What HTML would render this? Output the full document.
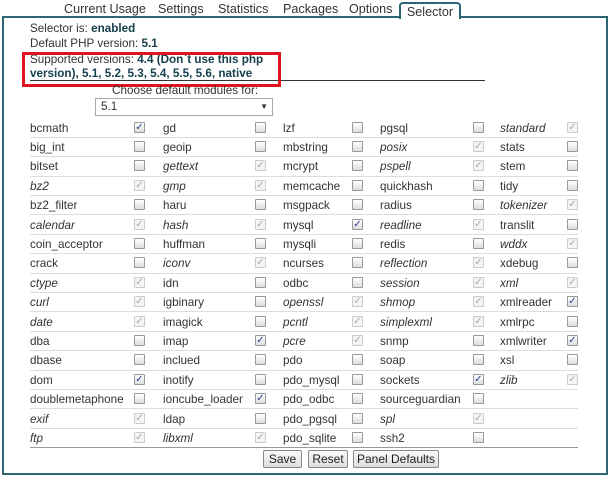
<!DOCTYPE html>
<html><head><style>
*{margin:0;padding:0;box-sizing:border-box}
body{width:610px;height:488px;background:#fff;font-family:"Liberation Sans",sans-serif;font-size:11.7px;color:#333;position:relative;overflow:hidden}
.a{position:absolute}
.tab{position:absolute;top:1px;height:16px;font-size:12.6px;color:#333;line-height:16px}
.panel{position:absolute;left:2px;top:16px;width:606px;height:459px;border:2px solid #2e6575}
b{color:#16404e}
.row{position:absolute;left:30px;width:548px;height:19.4px;border-bottom:1px solid #ddd}
.row span{position:absolute;top:3px;line-height:14px}
.n1{left:0}.n2{left:133px}.n3{left:253px}.n4{left:350px}.n5{left:470px}
.c1{left:104px}.c2{left:225px}.c3{left:322px}.c4{left:443px}.c5{left:537px}
i.cb{position:absolute;top:3px;width:11px;height:11px;border:1px solid #999;background:linear-gradient(#fff,#ddd);border-radius:1px;font-style:normal;font-size:10px;line-height:9px;text-align:center;color:#2a3f8f}
i.d{border-color:#ccc;background:#f4f4f4;color:#aaa}
em{font-style:italic}
.btn{position:absolute;top:450px;height:18px;border:1px solid #888;border-radius:2px;background:linear-gradient(#fafafa,#ddd);font-size:12px;line-height:16px;text-align:center;color:#222}
</style></head><body>
<div class="panel"></div>
<div class="tab" style="left:64px">Current Usage</div>
<div class="tab" style="left:158px">Settings</div>
<div class="tab" style="left:218px">Statistics</div>
<div class="tab" style="left:283px">Packages</div>
<div class="tab" style="left:349px">Options</div>
<div class="a" style="left:399px;top:2px;width:62px;height:17px;background:#fff;border:2px solid #2e6575;border-bottom:none;border-radius:4px 4px 0 0;text-align:center;line-height:16px;color:#333;font-size:12.6px">Selector</div>
<div class="a" style="left:30px;top:22px;line-height:14px">Selector is: <b>enabled</b></div>
<div class="a" style="left:30px;top:37px;line-height:14px">Default PHP version: <b>5.1</b></div>
<div class="a" style="left:30px;top:53px;line-height:13.5px;width:250px">Supported versions: <b>4.4 (Don`t use this php version), 5.1, 5.2, 5.3, 5.4, 5.5, 5.6, native</b></div>
<div class="a" style="left:30px;top:80px;width:455px;height:1px;background:#333"></div>
<div class="a" style="left:22px;top:52px;width:259px;height:35px;border:3px solid #e0141e"></div>
<div class="a" style="left:112px;top:84px;line-height:14px">Choose default modules for:</div>
<div class="a" style="left:95px;top:98px;width:178px;height:18px;border:1px solid #aaa;background:#fff;line-height:16px;padding-left:5px">5.1<span style="position:absolute;right:4px;top:0;font-size:8px">▼</span></div>

<div class="row" style="top:118.5px"><span class="n1">bcmath</span><i class="cb c1">✓</i><span class="n2">gd</span><i class="cb c2"></i><span class="n3">lzf</span><i class="cb c3"></i><span class="n4">pgsql</span><i class="cb c4"></i><span class="n5"><em>standard</em></span><i class="cb d c5">✓</i></div>
<div class="row" style="top:137.9px"><span class="n1">big_int</span><i class="cb c1"></i><span class="n2">geoip</span><i class="cb c2"></i><span class="n3">mbstring</span><i class="cb c3"></i><span class="n4"><em>posix</em></span><i class="cb d c4">✓</i><span class="n5">stats</span><i class="cb c5"></i></div>
<div class="row" style="top:157.3px"><span class="n1">bitset</span><i class="cb c1"></i><span class="n2"><em>gettext</em></span><i class="cb d c2">✓</i><span class="n3">mcrypt</span><i class="cb c3"></i><span class="n4"><em>pspell</em></span><i class="cb d c4">✓</i><span class="n5">stem</span><i class="cb c5"></i></div>
<div class="row" style="top:176.7px"><span class="n1"><em>bz2</em></span><i class="cb d c1">✓</i><span class="n2"><em>gmp</em></span><i class="cb d c2">✓</i><span class="n3">memcache</span><i class="cb c3"></i><span class="n4">quickhash</span><i class="cb c4"></i><span class="n5">tidy</span><i class="cb c5"></i></div>
<div class="row" style="top:196.1px"><span class="n1">bz2_filter</span><i class="cb c1"></i><span class="n2">haru</span><i class="cb c2"></i><span class="n3">msgpack</span><i class="cb c3"></i><span class="n4">radius</span><i class="cb c4"></i><span class="n5"><em>tokenizer</em></span><i class="cb d c5">✓</i></div>
<div class="row" style="top:215.5px"><span class="n1"><em>calendar</em></span><i class="cb d c1">✓</i><span class="n2"><em>hash</em></span><i class="cb d c2">✓</i><span class="n3">mysql</span><i class="cb c3">✓</i><span class="n4"><em>readline</em></span><i class="cb d c4">✓</i><span class="n5">translit</span><i class="cb c5"></i></div>
<div class="row" style="top:234.9px"><span class="n1">coin_acceptor</span><i class="cb c1"></i><span class="n2">huffman</span><i class="cb c2"></i><span class="n3">mysqli</span><i class="cb c3"></i><span class="n4">redis</span><i class="cb c4"></i><span class="n5"><em>wddx</em></span><i class="cb d c5">✓</i></div>
<div class="row" style="top:254.3px"><span class="n1">crack</span><i class="cb c1"></i><span class="n2"><em>iconv</em></span><i class="cb d c2">✓</i><span class="n3">ncurses</span><i class="cb c3"></i><span class="n4"><em>reflection</em></span><i class="cb d c4">✓</i><span class="n5">xdebug</span><i class="cb c5"></i></div>
<div class="row" style="top:273.7px"><span class="n1"><em>ctype</em></span><i class="cb d c1">✓</i><span class="n2">idn</span><i class="cb c2"></i><span class="n3">odbc</span><i class="cb c3"></i><span class="n4"><em>session</em></span><i class="cb d c4">✓</i><span class="n5"><em>xml</em></span><i class="cb d c5">✓</i></div>
<div class="row" style="top:293.1px"><span class="n1"><em>curl</em></span><i class="cb d c1">✓</i><span class="n2">igbinary</span><i class="cb c2"></i><span class="n3"><em>openssl</em></span><i class="cb d c3">✓</i><span class="n4"><em>shmop</em></span><i class="cb d c4">✓</i><span class="n5">xmlreader</span><i class="cb c5">✓</i></div>
<div class="row" style="top:312.5px"><span class="n1"><em>date</em></span><i class="cb d c1">✓</i><span class="n2">imagick</span><i class="cb c2"></i><span class="n3"><em>pcntl</em></span><i class="cb d c3">✓</i><span class="n4"><em>simplexml</em></span><i class="cb d c4">✓</i><span class="n5">xmlrpc</span><i class="cb c5"></i></div>
<div class="row" style="top:331.9px"><span class="n1">dba</span><i class="cb c1"></i><span class="n2">imap</span><i class="cb c2">✓</i><span class="n3"><em>pcre</em></span><i class="cb d c3">✓</i><span class="n4">snmp</span><i class="cb c4"></i><span class="n5">xmlwriter</span><i class="cb c5">✓</i></div>
<div class="row" style="top:351.3px"><span class="n1">dbase</span><i class="cb c1"></i><span class="n2">inclued</span><i class="cb c2"></i><span class="n3">pdo</span><i class="cb c3"></i><span class="n4">soap</span><i class="cb c4"></i><span class="n5">xsl</span><i class="cb c5"></i></div>
<div class="row" style="top:370.7px"><span class="n1">dom</span><i class="cb c1">✓</i><span class="n2">inotify</span><i class="cb c2"></i><span class="n3">pdo_mysql</span><i class="cb c3"></i><span class="n4">sockets</span><i class="cb c4">✓</i><span class="n5"><em>zlib</em></span><i class="cb d c5">✓</i></div>
<div class="row" style="top:390.1px"><span class="n1">doublemetaphone</span><i class="cb c1"></i><span class="n2">ioncube_loader</span><i class="cb c2">✓</i><span class="n3">pdo_odbc</span><i class="cb c3"></i><span class="n4">sourceguardian</span><i class="cb c4"></i></div>
<div class="row" style="top:409.5px"><span class="n1"><em>exif</em></span><i class="cb d c1">✓</i><span class="n2">ldap</span><i class="cb c2"></i><span class="n3">pdo_pgsql</span><i class="cb c3"></i><span class="n4"><em>spl</em></span><i class="cb d c4">✓</i></div>
<div class="row" style="top:428.9px;border-bottom-color:#999"><span class="n1"><em>ftp</em></span><i class="cb d c1">✓</i><span class="n2"><em>libxml</em></span><i class="cb d c2">✓</i><span class="n3">pdo_sqlite</span><i class="cb c3"></i><span class="n4">ssh2</span><i class="cb c4"></i></div>

<div class="btn" style="left:263px;width:39px">Save</div>
<div class="btn" style="left:308px;width:40px">Reset</div>
<div class="btn" style="left:353px;width:86px">Panel Defaults</div>
</body></html>
